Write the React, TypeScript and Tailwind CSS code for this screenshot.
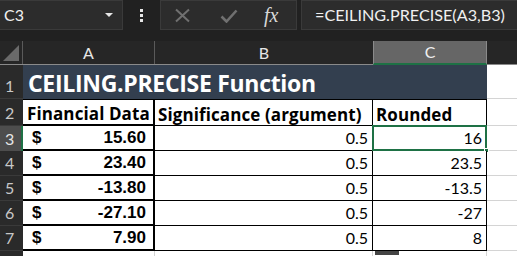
import React from 'react';

const rows = [
  { n: 3, a: '15.60', b: '0.5', c: '16' },
  { n: 4, a: '23.40', b: '0.5', c: '23.5' },
  { n: 5, a: '-13.80', b: '0.5', c: '-13.5' },
  { n: 6, a: '-27.10', b: '0.5', c: '-27' },
  { n: 7, a: '7.90', b: '0.5', c: '8' },
];

const cal = "font-['Lato','Open_Sans',sans-serif]";
const head = "text-[17px] font-bold text-black leading-none font-['Open_Sans',sans-serif] tracking-[0.1px]";

function RowHead({ n, active }: { n?: number; active?: boolean }) {
  return (
    <div
      className={
        'w-[23px] shrink-0 flex items-end pl-[5px] pb-[1px] text-[16px] leading-none ' +
        cal +
        (active
          ? ' bg-[#4d4d4d] text-[#e6e6e6] border-r-2 border-[#1e7145]'
          : ' bg-[#2a2a2a] text-[#c8c8c8] border-b border-[#3a3a3a]')
      }
    >
      {n !== undefined && <span className="mb-[3px]">{n}</span>}
    </div>
  );
}

export default function App() {
  return (
    <div className="w-[517px] h-[256px] bg-[#212121] overflow-hidden select-none">
      {/* formula bar */}
      <div className="flex h-[30px] items-stretch">
        <div className="w-[123px] bg-[#2c2c2c] border border-[#3a3a3a] border-l-0 flex items-center justify-between pl-[4px] pr-[9px]">
          <span className={'text-[16px] text-[#f0f0f0] ' + cal}>C3</span>
          <span className="w-0 h-0 border-l-[4px] border-r-[4px] border-t-[4px] border-l-transparent border-r-transparent border-t-[#e6e6e6]" />
        </div>
        <div className="w-[37px] flex flex-col items-center justify-center gap-[2px]">
          <span className="w-[3px] h-[3px] bg-[#e6e6e6]" />
          <span className="w-[3px] h-[3px] bg-[#e6e6e6]" />
          <span className="w-[3px] h-[3px] bg-[#e6e6e6]" />
        </div>
        <div className="w-[137px] bg-[#2c2c2c] border border-[#3a3a3a] flex items-center pl-[13px]">
          <svg width="17" height="15" viewBox="0 0 17 15" className="mt-[1px]">
            <path d="M2 1.5 L15 13.5 M15 1.5 L2 13.5" stroke="#707070" strokeWidth="2" fill="none" />
          </svg>
          <svg width="18" height="14" viewBox="0 0 18 14" className="ml-[29px] mt-[2px]">
            <path d="M1.5 7.5 L6.5 12.5 L16.5 1.5" stroke="#707070" strokeWidth="2.6" fill="none" />
          </svg>
          <span className="ml-[26px] text-[20px] italic text-[#d8d8d8] font-['Liberation_Serif',serif] leading-none">fx</span>
        </div>
        <div className="w-[4px]" />
        <div className="flex-1 bg-[#2c2c2c] border border-[#3a3a3a] border-r-0 flex items-center pl-[13px]">
          <span className={'text-[16.2px] text-[#f0f0f0] ' + cal}>=CEILING.PRECISE(A3,B3)</span>
        </div>
      </div>
      <div className="h-[11px]" />

      {/* column headers */}
      <div className="flex h-[24px] bg-[#262626] border-b border-[#8a8a8a]">
        <div className="w-[23px] shrink-0 flex items-end justify-end pr-[3px] pb-[3px] border-r border-[#5a5a5a]">
          <span className="w-0 h-0 border-l-[16px] border-b-[16px] border-l-transparent border-b-[#6a6a6a]" />
        </div>
        <div className={'w-[132px] shrink-0 flex items-center justify-center text-[16px] text-[#e6e6e6] border-r border-[#5a5a5a] ' + cal}>A</div>
        <div className={'w-[218px] shrink-0 flex items-center justify-center text-[16px] text-[#e6e6e6] ' + cal}>B</div>
        <div className={'w-[114px] shrink-0 flex items-center justify-center text-[16px] text-[#f0f0f0] bg-[#666666] border-x border-[#8a8a8a] border-b-2 border-b-[#1e7145] -mb-[1px] ' + cal}>C</div>
        <div className="flex-1" />
      </div>

      {/* row 1 */}
      <div className="flex h-[34px]">
        <RowHead n={1} />
        <div className="w-[464px] shrink-0 bg-[#333f4f] flex items-center pl-[5px]">
          <span className="text-[23px] font-bold text-white leading-none pt-[2px] font-['Open_Sans',sans-serif] tracking-[-0.3px]">
            CEILING.PRECISE Function
          </span>
        </div>
        <div className="flex-1 bg-white border-b border-[#d4d4d4]" />
      </div>

      {/* row 2 */}
      <div className="flex h-[27px]">
        <RowHead n={2} />
        <div className="w-[132px] shrink-0 bg-white border-t border-black border-r-2 border-b-2 flex items-end pl-[4px] pb-[2px]">
          <span className={head}>Financial Data</span>
        </div>
        <div className="w-[218px] shrink-0 bg-white border-t border-black border-r border-b flex items-end pl-[3px] pb-[2px]">
          <span className={head}>Significance (argument)</span>
        </div>
        <div className="w-[114px] shrink-0 bg-white border-t border-black border-r border-b flex items-end pl-[3px] pb-[2px]">
          <span className={head}>Rounded</span>
        </div>
        <div className="flex-1 bg-white border-b border-[#d4d4d4]" />
      </div>

      {rows.map((r, i) => (
        <div key={r.n} className="flex h-[25px]">
          <RowHead n={r.n} active={i === 0} />
          <div className="w-[132px] shrink-0 bg-white border-black border-r-2 border-b-2 flex items-center justify-between pl-[9px] pr-[7px]">
            <span className="text-[17px] font-bold text-black font-['Liberation_Sans',Arial,sans-serif]">$</span>
            <span className="text-[17px] font-bold text-black font-['Liberation_Sans',Arial,sans-serif]">{r.a}</span>
          </div>
          <div className="w-[218px] shrink-0 bg-white border-black border-r border-b flex items-center justify-end pr-[4px]">
            <span className={'text-[16px] text-black ' + cal}>{r.b}</span>
          </div>
          <div className="relative w-[114px] shrink-0 bg-white border-black border-r border-b flex items-center justify-end pr-[4px]">
            <span className={'text-[16px] text-black ' + cal}>{r.c}</span>
            {i === 0 && (
              <>
                <div className="absolute -left-[1px] -top-[1px] -right-[1px] -bottom-[1px] border-2 border-[#1e7145]" />
                <div className="absolute -right-[3px] -bottom-[3px] w-[5px] h-[5px] bg-[#1e7145] border border-white" />
              </>
            )}
          </div>
          <div className="flex-1 bg-white border-b border-[#d4d4d4]" />
        </div>
      ))}

      {/* row 8, cut off by the window */}
      <div className="flex h-[10px]">
        <RowHead />
        <div className="w-[132px] shrink-0 bg-white border-r border-[#d4d4d4]" />
        <div className="w-[218px] shrink-0 bg-white border-r border-[#d4d4d4]" />
        <div className="w-[114px] shrink-0 bg-white border-r border-[#d4d4d4] pl-[2px]">
          <div className="w-[24px] h-[4px] bg-[#444444]" />
        </div>
        <div className="flex-1 bg-white" />
      </div>
    </div>
  );
}
